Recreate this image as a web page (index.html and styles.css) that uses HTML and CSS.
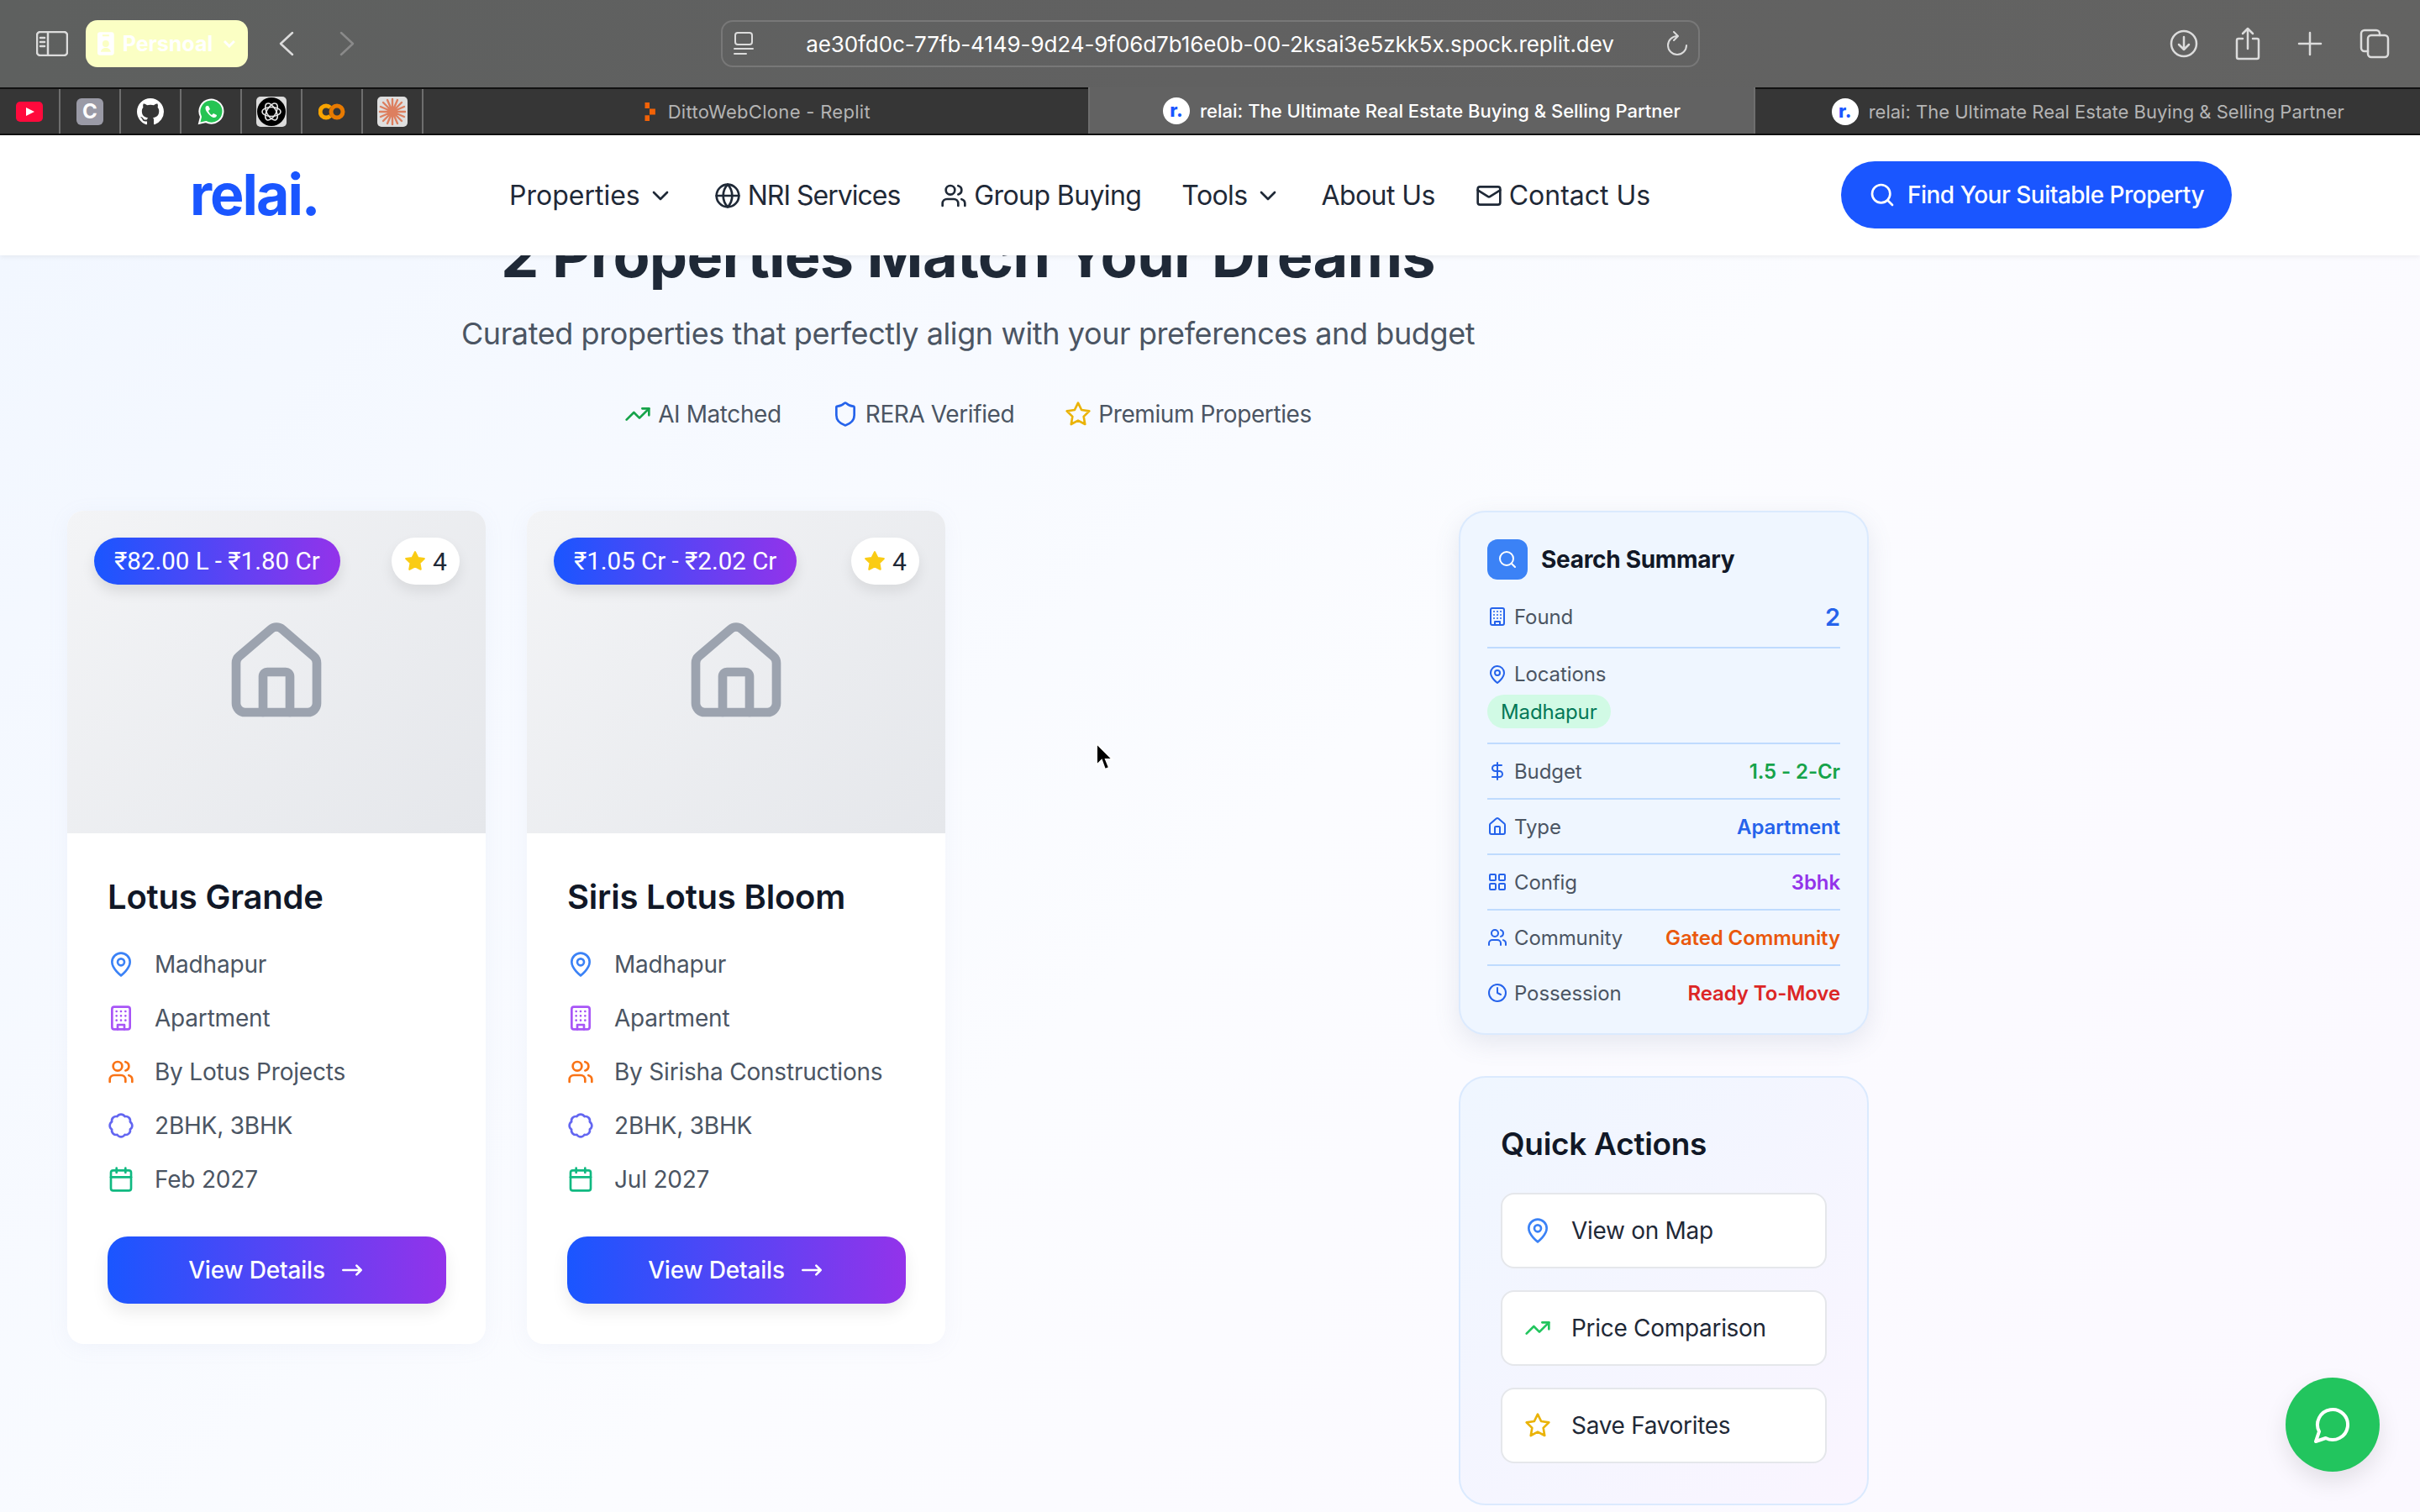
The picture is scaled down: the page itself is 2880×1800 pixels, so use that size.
FILE: index.html
```html
<!DOCTYPE html>
<html lang="en">
<head>
  <meta charset="UTF-8" />
  <title>relai: The Ultimate Real Estate Buying &amp; Selling Partner</title>
  <link rel="stylesheet" href="styles.css">
</head>
<body>

  <!-- icon set -->
  <svg class="sprite" xmlns="http://www.w3.org/2000/svg">
    <symbol id="i-pin" viewBox="0 0 24 24"><path d="M20 10c0 6-8 12-8 12s-8-6-8-12a8 8 0 0 1 16 0Z"/><circle cx="12" cy="10" r="3"/></symbol>
    <symbol id="i-building" viewBox="0 0 24 24"><rect x="4" y="2" width="16" height="20" rx="2"/><path d="M9 22v-4h6v4M8 6h.01M16 6h.01M12 6h.01M12 10h.01M12 14h.01M16 10h.01M16 14h.01M8 10h.01M8 14h.01"/></symbol>
    <symbol id="i-users" viewBox="0 0 24 24"><path d="M16 21v-2a4 4 0 0 0-4-4H6a4 4 0 0 0-4 4v2"/><circle cx="9" cy="7" r="4"/><path d="M22 21v-2a4 4 0 0 0-3-3.87"/><path d="M16 3.13a4 4 0 0 1 0 7.75"/></symbol>
    <symbol id="i-badge" viewBox="0 0 24 24"><path d="M3.85 8.62a4 4 0 0 1 4.78-4.77 4 4 0 0 1 6.74 0 4 4 0 0 1 4.78 4.78 4 4 0 0 1 0 6.74 4 4 0 0 1-4.77 4.78 4 4 0 0 1-6.75 0 4 4 0 0 1-4.78-4.77 4 4 0 0 1 0-6.76Z"/></symbol>
    <symbol id="i-calendar" viewBox="0 0 24 24"><path d="M8 2v4M16 2v4"/><rect width="18" height="18" x="3" y="4" rx="2"/><path d="M3 10h18"/></symbol>
    <symbol id="i-arrow" viewBox="0 0 24 24"><path d="M4 12h16M16 8l4 4-4 4"/></symbol>
    <symbol id="i-house" viewBox="0 0 24 24"><path d="M15 21v-8a1 1 0 0 0-1-1h-4a1 1 0 0 0-1 1v8"/><path d="M3 10a2 2 0 0 1 .709-1.528l7-5.999a2 2 0 0 1 2.582 0l7 5.999A2 2 0 0 1 21 10v9a2 2 0 0 1-2 2H5a2 2 0 0 1-2-2z"/></symbol>
    <symbol id="i-chevron" viewBox="0 0 24 24"><path d="m6 9 6 6 6-6"/></symbol>
    <symbol id="i-globe" viewBox="0 0 24 24"><circle cx="12" cy="12" r="10"/><path d="M12 2a14.5 14.5 0 0 0 0 20 14.5 14.5 0 0 0 0-20"/><path d="M2 12h20"/></symbol>
    <symbol id="i-mail" viewBox="0 0 24 24"><rect width="20" height="16" x="2" y="4" rx="2"/><path d="m22 7-8.97 5.7a1.94 1.94 0 0 1-2.06 0L2 7"/></symbol>
    <symbol id="i-search" viewBox="0 0 24 24"><circle cx="11" cy="11" r="8"/><path d="m21 21-4.3-4.3"/></symbol>
    <symbol id="i-dollar" viewBox="0 0 24 24"><path d="M12 2v20"/><path d="M17 5H9.5a3.5 3.5 0 0 0 0 7h5a3.5 3.5 0 0 1 0 7H6"/></symbol>
    <symbol id="i-grid" viewBox="0 0 24 24"><rect width="7" height="7" x="3" y="3" rx="1"/><rect width="7" height="7" x="14" y="3" rx="1"/><rect width="7" height="7" x="14" y="14" rx="1"/><rect width="7" height="7" x="3" y="14" rx="1"/></symbol>
    <symbol id="i-clock" viewBox="0 0 24 24"><circle cx="12" cy="12" r="10"/><path d="M12 6v6l4 2"/></symbol>
    <symbol id="i-trend" viewBox="0 0 24 24"><path d="M22 7l-8.5 8.5-5-5L2 17"/><path d="M16 7h6v6"/></symbol>
    <symbol id="i-shield" viewBox="0 0 24 24"><path d="M20 13c0 5-3.5 7.500-7.660 8.950a1 1 0 0 1-.67-.01C7.500 20.500 4 18 4 13V6a1 1 0 0 1 1-1c2 0 4.500-1.200 6.240-2.720a1.170 1.170 0 0 1 1.520 0C14.510 3.810 17 5 19 5a1 1 0 0 1 1 1z"/></symbol>
    <symbol id="i-star" viewBox="0 0 24 24"><path d="M12 2l3.090 6.260L22 9.270l-5 4.870 1.180 6.880L12 17.770l-6.180 3.250L7 14.140 2 9.270l6.910-1.010z"/></symbol>
    <symbol id="i-chat" viewBox="0 0 24 24"><path d="M7.900 20A9 9 0 1 0 4 16.100L2 22Z"/></symbol>
  </svg>

  <!-- Safari toolbar -->
  <header class="toolbar">
    <svg class="tool-icon sidebar-icon" viewBox="0 0 38 30"><rect x="1" y="1" width="36" height="28" rx="4"/><path d="M14 1v28M5 8h5M5 13h5M5 18h5"/></svg>
    <div class="profile">
      <svg class="profile-card" viewBox="0 0 20 28"><path d="M3 0h14a3 3 0 0 1 3 3v22a3 3 0 0 1-3 3H3a3 3 0 0 1-3-3V3a3 3 0 0 1 3-3zm3 3v2h8V3zm4 7a4 4 0 1 0 0 8 4 4 0 0 0 0-8zm-6 14h12c0-3-3-5-6-5s-6 2-6 5z" fill-rule="evenodd"/></svg>
      <span>Persnoal</span>
      <svg class="profile-caret" viewBox="0 0 16 10"><path d="M2 2l6 6 6-6"/></svg>
    </div>
    <svg class="tool-icon nav-back" viewBox="0 0 20 30"><path d="M17 2L3 15l14 13"/></svg>
    <svg class="tool-icon nav-forward" viewBox="0 0 20 30"><path d="M3 2l14 13L3 28"/></svg>
    <div class="address">
      <svg class="tool-icon address-icon" viewBox="0 0 24 30"><rect x="2" y="2" width="20" height="14" rx="3"/><path d="M1 21h22M1 27h14"/></svg>
      <span class="url">ae30fd0c-77fb-4149-9d24-9f06d7b16e0b-00-2ksai3e5zkk5x.spock.replit.dev</span>
      <svg class="tool-icon reload-icon" viewBox="0 0 26 30"><path d="M13 6a11 11 0 1 0 11 11M9 1l5 5-5 5"/></svg>
    </div>
    <div class="tool-right">
      <svg class="tool-icon" width="34" height="34" viewBox="0 0 34 34"><circle cx="17" cy="17" r="15"/><path d="M17 9v15M11 18l6 6 6-6"/></svg>
      <svg class="tool-icon" width="30" height="40" viewBox="0 0 30 40"><path d="M9 14H4a2 2 0 0 0-2 2v20a2 2 0 0 0 2 2h22a2 2 0 0 0 2-2V16a2 2 0 0 0-2-2h-5M15 26V2M9 8l6-6 6 6"/></svg>
      <svg class="tool-icon" width="30" height="30" viewBox="0 0 30 30"><path d="M15 2v26M2 15h26"/></svg>
      <svg class="tool-icon" width="36" height="36" viewBox="0 0 36 36"><rect x="10" y="8" width="24" height="26" rx="4"/><path d="M10 27H6a4 4 0 0 1-4-4V6a4 4 0 0 1 4-4h14a4 4 0 0 1 4 4v2"/></svg>
    </div>
  </header>

  <!-- tabs -->
  <div class="tabbar">
    <div class="pin">
      <svg class="fav" viewBox="0 0 32 32"><rect x="0" y="4" width="32" height="24" rx="5" fill="#ff0a3c"/><path d="M12 11l10 5-10 5z" fill="#fff"/></svg>
    </div>
    <div class="pin"><span class="fav-c">C</span></div>
    <div class="pin">
      <svg class="fav" viewBox="0 0 16 16"><path fill="#fff" d="M8 0C3.580 0 0 3.580 0 8c0 3.540 2.290 6.530 5.470 7.590.4.070.55-.17.55-.38 0-.19-.01-.82-.01-1.490-2.010.37-2.530-.49-2.690-.94-.09-.23-.48-.94-.82-1.130-.28-.15-.68-.52-.01-.53.63-.01 1.080.58 1.230.82.72 1.210 1.870.87 2.330.66.070-.52.28-.87.51-1.070-1.780-.2-3.640-.89-3.640-3.950 0-.87.31-1.590.82-2.150-.08-.2-.36-1.020.08-2.120 0 0 .67-.21 2.200.82.64-.18 1.320-.27 2-.27.68 0 1.360.09 2 .27 1.530-1.040 2.200-.82 2.200-.82.44 1.100.16 1.920.08 2.120.51.56.82 1.270.82 2.150 0 3.070-1.870 3.750-3.650 3.950.29.25.54.73.54 1.480 0 1.070-.01 1.930-.01 2.200 0 .21.15.46.55.38A8.013 8.013 0 0 0 16 8c0-4.420-3.580-8-8-8z"/></svg>
    </div>
    <div class="pin">
      <svg class="fav" viewBox="0 0 32 32"><path d="M2 30l2-8a14 14 0 1 1 6 6z" fill="#25c453" stroke="#fff" stroke-width="2"/><path d="M11 9c-2 1-2 4 0 7s5 6 8 7c2 .5 4-1 4-3l-4-2-2 2c-2-1-3-3-4-5l2-2-2-4z" fill="#fff"/></svg>
    </div>
    <div class="pin">
      <svg class="fav fav-tile" viewBox="0 0 36 36"><rect width="36" height="36" rx="5" fill="#dcdcdc"/><circle cx="18" cy="18" r="17" fill="#000"/><g fill="none" stroke="#e8e8e8" stroke-width="1.500"><ellipse cx="18" cy="18" rx="11" ry="5.500"/><ellipse cx="18" cy="18" rx="11" ry="5.500" transform="rotate(60 18 18)"/><ellipse cx="18" cy="18" rx="11" ry="5.500" transform="rotate(120 18 18)"/></g></svg>
    </div>
    <div class="pin">
      <svg class="fav" viewBox="0 0 32 32"><g fill="none" stroke-width="5"><path d="M14 11a7 7 0 1 0 0 10" stroke="#f9a400"/><circle cx="22" cy="16" r="7" stroke="#e87a00"/></g></svg>
    </div>
    <div class="pin">
      <svg class="fav fav-tile" viewBox="0 0 36 36"><rect width="36" height="36" rx="5" fill="#dfdfdf"/><g stroke="#dd7f5f" stroke-width="2.400" stroke-linecap="round"><path d="M18 3v30M3 18h30M7 7l22 22M29 7L7 29M12 4l12 28M24 4L12 32M4 12l28 12M32 12L4 24"/></g></svg>
    </div>
    <div class="tab tab-ditto">
      <svg class="replit-mark" viewBox="0 0 20 32"><path fill="#f26207" d="M2 0h8v10H2zM10 11h10v10H10zM2 22h8v10H2z"/></svg>
      <span>DittoWebClone - Replit</span>
    </div>
    <div class="tab tab-active"><span class="relai-fav">r.</span><span>relai: The Ultimate Real Estate Buying &amp; Selling Partner</span></div>
    <div class="tab"><span class="relai-fav">r.</span><span>relai: The Ultimate Real Estate Buying &amp; Selling Partner</span></div>
  </div>

  <!-- site header -->
  <nav class="site-nav">
    <div class="logo">relai.</div>
    <div class="nav-links">
      <a class="nav-link nav-wide">Properties <svg class="icon chev"><use href="#i-chevron"/></svg></a>
      <a class="nav-link nav-tight"><svg class="icon nav-icon"><use href="#i-globe"/></svg>NRI Services</a>
      <a class="nav-link"><svg class="icon nav-icon"><use href="#i-users"/></svg>Group Buying</a>
      <a class="nav-link">Tools <svg class="icon chev"><use href="#i-chevron"/></svg></a>
      <a class="nav-link">About Us</a>
      <a class="nav-link nav-wide"><svg class="icon nav-icon"><use href="#i-mail"/></svg>Contact Us</a>
    </div>
    <button class="find-btn"><svg class="icon"><use href="#i-search"/></svg>Find Your Suitable Property</button>
  </nav>

  <main class="page">
    <div class="wrap">
      <section class="hero">
        <h1>2 Properties Match Your Dreams</h1>
        <p class="hero-sub">Curated properties that perfectly align with your preferences and budget</p>
        <div class="hero-tags">
          <span class="tag"><svg class="icon c-green"><use href="#i-trend"/></svg>AI Matched</span>
          <span class="tag"><svg class="icon c-blue"><use href="#i-shield"/></svg>RERA Verified</span>
          <span class="tag"><svg class="icon c-amber"><use href="#i-star"/></svg>Premium Properties</span>
        </div>
      </section>

      <div class="layout">
        <div class="cards">
          <article class="card">
            <div class="card-img">
              <span class="price">₹82.00 L - ₹1.80 Cr</span>
              <span class="rating"><svg class="icon star-fill"><use href="#i-star"/></svg>4</span>
              <svg class="icon house"><use href="#i-house"/></svg>
            </div>
            <div class="card-body">
              <h3>Lotus Grande</h3>
              <ul class="facts">
                <li><svg class="icon c-sky"><use href="#i-pin"/></svg>Madhapur</li>
                <li><svg class="icon c-purple"><use href="#i-building"/></svg>Apartment</li>
                <li><svg class="icon c-orange"><use href="#i-users"/></svg>By Lotus Projects</li>
                <li><svg class="icon c-indigo"><use href="#i-badge"/></svg>2BHK, 3BHK</li>
                <li><svg class="icon c-emerald"><use href="#i-calendar"/></svg>Feb 2027</li>
              </ul>
              <button class="details-btn">View Details <svg class="icon"><use href="#i-arrow"/></svg></button>
            </div>
          </article>

          <article class="card">
            <div class="card-img">
              <span class="price">₹1.05 Cr - ₹2.02 Cr</span>
              <span class="rating"><svg class="icon star-fill"><use href="#i-star"/></svg>4</span>
              <svg class="icon house"><use href="#i-house"/></svg>
            </div>
            <div class="card-body">
              <h3>Siris Lotus Bloom</h3>
              <ul class="facts">
                <li><svg class="icon c-sky"><use href="#i-pin"/></svg>Madhapur</li>
                <li><svg class="icon c-purple"><use href="#i-building"/></svg>Apartment</li>
                <li><svg class="icon c-orange"><use href="#i-users"/></svg>By Sirisha Constructions</li>
                <li><svg class="icon c-indigo"><use href="#i-badge"/></svg>2BHK, 3BHK</li>
                <li><svg class="icon c-emerald"><use href="#i-calendar"/></svg>Jul 2027</li>
              </ul>
              <button class="details-btn">View Details <svg class="icon"><use href="#i-arrow"/></svg></button>
            </div>
          </article>
        </div>

        <aside class="side">
          <div class="summary">
            <div class="summary-head">
              <span class="summary-badge"><svg class="icon"><use href="#i-search"/></svg></span>
              <h4>Search Summary</h4>
            </div>
            <div class="row row-first"><span class="row-label"><svg class="icon"><use href="#i-building"/></svg>Found</span><b class="val-count">2</b></div>
            <div class="row row-stack">
              <span class="row-label"><svg class="icon"><use href="#i-pin"/></svg>Locations</span>
              <span class="chip">Madhapur</span>
            </div>
            <div class="row"><span class="row-label"><svg class="icon"><use href="#i-dollar"/></svg>Budget</span><b class="val-green">1.5 - 2-Cr</b></div>
            <div class="row"><span class="row-label"><svg class="icon"><use href="#i-house"/></svg>Type</span><b class="val-blue">Apartment</b></div>
            <div class="row"><span class="row-label"><svg class="icon"><use href="#i-grid"/></svg>Config</span><b class="val-purple">3bhk</b></div>
            <div class="row"><span class="row-label"><svg class="icon"><use href="#i-users"/></svg>Community</span><b class="val-orange">Gated Community</b></div>
            <div class="row"><span class="row-label"><svg class="icon"><use href="#i-clock"/></svg>Possession</span><b class="val-red">Ready To-Move</b></div>
          </div>

          <div class="actions">
            <h4>Quick Actions</h4>
            <a class="action"><svg class="icon c-sky"><use href="#i-pin"/></svg>View on Map</a>
            <a class="action"><svg class="icon c-green2"><use href="#i-trend"/></svg>Price Comparison</a>
            <a class="action"><svg class="icon c-amber"><use href="#i-star"/></svg>Save Favorites</a>
          </div>
        </aside>
      </div>
    </div>

    <button class="chat-fab"><svg class="icon"><use href="#i-chat"/></svg></button>
    <svg class="cursor" viewBox="0 0 22 34"><path d="M2 1v26l6-6 4 11 5-2-4-10h8z" fill="#000" stroke="#fff" stroke-width="2"/></svg>
  </main>

</body>
</html>
```

FILE: styles.css
```css
* {
  box-sizing: border-box;
}

html, body {
  margin: 0;
  height: 1800px;
  overflow: hidden;
}

body {
  display: flex;
  flex-direction: column;
  font-family: Inter, "Noto Sans", sans-serif;
  color: #1f2937;
  background: #f5f8ff;
}

h1, h3, h4, p, ul {
  margin: 0;
  padding: 0;
}

.sprite {
  display: none;
}

.icon {
  width: 32px;
  height: 32px;
  flex: none;
  fill: none;
  stroke: currentColor;
  stroke-width: 2;
  stroke-linecap: round;
  stroke-linejoin: round;
}

/* Safari toolbar */
.toolbar {
  height: 104px;
  flex: none;
  display: flex;
  align-items: center;
  padding: 0 36px 0 43px;
  background: linear-gradient(90deg, #5e605f, #616161 50%, #636362);
}

.tool-icon {
  flex: none;
  fill: none;
  stroke: #dcdcdc;
  stroke-width: 2.5;
  stroke-linecap: round;
  stroke-linejoin: round;
}

.sidebar-icon {
  width: 38px;
  height: 30px;
}

.profile {
  width: 193px;
  height: 56px;
  margin-left: 21px;
  display: flex;
  align-items: center;
  padding: 0 14px;
  border-radius: 14px;
  background: #fbffc4;
  color: #fff;
  font-size: 25px;
  font-weight: 700;
}

.profile-card {
  width: 20px;
  height: 28px;
  fill: #fff;
  margin-right: 10px;
}

.profile-caret {
  width: 16px;
  height: 10px;
  margin-left: 12px;
  fill: none;
  stroke: #fff;
  stroke-width: 3;
}

.nav-back {
  width: 20px;
  height: 30px;
  margin-left: 36px;
}

.nav-forward {
  width: 20px;
  height: 30px;
  margin-left: 52px;
  stroke: #8a8a8a;
}

.address {
  width: 1165px;
  height: 56px;
  margin-left: 435px;
  display: flex;
  align-items: center;
  padding: 0 12px 0 13px;
  border: 2px solid #787878;
  border-radius: 14px;
}

.address-icon {
  width: 24px;
  height: 30px;
  stroke-width: 2;
}

.url {
  flex: 1;
  text-align: center;
  color: #fff;
  font-size: 26px;
  letter-spacing: -0.08px;
  white-space: nowrap;
}

.reload-icon {
  width: 26px;
  height: 30px;
  stroke-width: 2;
}

.tool-right {
  margin-left: auto;
  display: flex;
  align-items: center;
  gap: 44px;
}

/* tab strip */
.tabbar {
  height: 57px;
  flex: none;
  display: flex;
  background: #363636;
  border-top: 2px solid #111;
  border-bottom: 2px solid #111;
}

.pin {
  width: 72px;
  flex: none;
  display: flex;
  align-items: center;
  justify-content: center;
  border-right: 2px solid #6e6e6e;
}

.fav {
  width: 32px;
  height: 32px;
}

.fav-tile {
  width: 36px;
  height: 36px;
}

.fav-c {
  width: 32px;
  height: 32px;
  border-radius: 6px;
  background: #9a9aa6;
  color: #fff;
  font-size: 24px;
  font-weight: 700;
  line-height: 32px;
  text-align: center;
}

.tab {
  flex: 1;
  display: flex;
  align-items: center;
  justify-content: center;
  gap: 12px;
  color: #b4b4b4;
  font-size: 22px;
  white-space: nowrap;
  background: #363636;
}

.tab-ditto {
  letter-spacing: 0.3px;
}

.tab-active {
  margin-top: -2px;
  background: #626262;
  color: #fff;
  font-weight: 500;
  border-left: 2px solid #6e6e6e;
  border-right: 2px solid #6e6e6e;
}

.replit-mark {
  width: 20px;
  height: 22px;
}

.relai-fav {
  width: 32px;
  height: 32px;
  border-radius: 50%;
  background: #fff;
  color: #1a56ff;
  font-size: 22px;
  font-weight: 800;
  line-height: 30px;
  text-align: center;
}

/* site header */
.site-nav {
  position: relative;
  z-index: 2;
  height: 143px;
  flex: none;
  display: flex;
  align-items: center;
  padding: 0 224px 2px 226px;
  background: #fff;
  box-shadow: 0 2px 6px rgba(0, 0, 0, 0.06);
}

.logo {
  width: 380px;
  flex: none;
  margin-bottom: 2px;
  color: #1a56ff;
  font-size: 68px;
  font-weight: 700;
  letter-spacing: -2px;
  line-height: 1;
}

.nav-links {
  display: flex;
  align-items: center;
  gap: 48px;
  margin-top: 2px;
  font-size: 32px;
  color: #1f2937;
  letter-spacing: -0.6px;
}

.nav-link {
  display: flex;
  align-items: center;
  gap: 8px;
  white-space: nowrap;
}

.nav-wide {
  letter-spacing: 0;
}

.nav-tight {
  letter-spacing: -1px;
}

.chev {
  width: 32px;
  height: 32px;
}

.nav-icon {
  width: 32px;
  height: 32px;
}

.find-btn {
  margin-left: auto;
  height: 80px;
  width: 465px;
  display: flex;
  align-items: center;
  justify-content: center;
  gap: 14px;
  border: 0;
  border-radius: 40px;
  background: #1a56ff;
  color: #fff;
  font-family: inherit;
  font-size: 28px;
  font-weight: 500;
  letter-spacing: -0.5px;
}

/* page */
.page {
  position: relative;
  flex: 1;
  overflow: hidden;
  background: linear-gradient(135deg, #f2f7ff, #fbfcff 50%, #fbf8ff);
}

.wrap {
  width: 2144px;
  margin: -40px 0 0 80px;
}

.hero {
  text-align: center;
}

.hero h1 {
  font-size: 72px;
  line-height: 80px;
  font-weight: 700;
  color: #1f2937;
  letter-spacing: -0.8px;
}

.hero-sub {
  margin-top: 27px;
  font-size: 36px;
  line-height: 52px;
  color: #4b5563;
  letter-spacing: -0.4px;
}

.hero-tags {
  margin-top: 53px;
  display: flex;
  justify-content: center;
  gap: 60px;
  font-size: 28px;
  color: #4b5563;
  letter-spacing: -0.4px;
}

.tag {
  display: flex;
  align-items: center;
  gap: 8px;
}

.c-green { color: #16a34a; }
.c-green2 { color: #22c55e; }
.c-blue { color: #2563eb; }
.c-amber { color: #eab308; }
.c-sky { color: #3b82f6; }
.c-purple { color: #a855f7; }
.c-orange { color: #f97316; }
.c-indigo { color: #6366f1; }
.c-emerald { color: #10b981; }

.layout {
  margin-top: 98px;
  display: flex;
  justify-content: space-between;
  align-items: flex-start;
}

.cards {
  display: flex;
  gap: 49px;
}

/* property cards */
.card {
  width: 498px;
  height: 992px;
  border-radius: 20px;
  background: #fff;
  overflow: hidden;
  box-shadow: 0 4px 24px rgba(148, 163, 200, 0.08);
}

.card-img {
  position: relative;
  height: 384px;
  display: flex;
  align-items: center;
  justify-content: center;
  background: linear-gradient(135deg, #f3f4f6, #e5e7eb);
}

.house {
  width: 128px;
  height: 128px;
  color: #9ca3af;
}

.price {
  position: absolute;
  top: 32px;
  left: 32px;
  height: 56px;
  padding: 0 24px;
  display: flex;
  align-items: center;
  border-radius: 28px;
  background: linear-gradient(90deg, #1a56ff, #9333ea);
  color: #fff;
  font-family: Roboto, sans-serif;
  font-size: 29.5px;
  box-shadow: 0 8px 16px rgba(0, 0, 0, 0.1);
  white-space: nowrap;
}

.rating {
  position: absolute;
  top: 32px;
  right: 31px;
  height: 56px;
  width: 81px;
  display: flex;
  align-items: center;
  justify-content: center;
  gap: 8px;
  border-radius: 28px;
  background: #fff;
  color: #1f2937;
  font-family: Roboto, sans-serif;
  font-size: 30px;
  box-shadow: 0 8px 16px rgba(0, 0, 0, 0.08);
}

.star-fill {
  width: 26px;
  height: 26px;
  fill: #facc15;
  color: #facc15;
}

.card-body {
  padding: 51px 48px 0;
}

.card-body h3 {
  font-size: 40px;
  line-height: 50px;
  font-weight: 600;
  color: #111827;
  letter-spacing: -0.2px;
}

.facts {
  margin-top: 23px;
  list-style: none;
  font-size: 28px;
  color: #4b5563;
  letter-spacing: -0.2px;
}

.facts li {
  height: 64px;
  display: flex;
  align-items: center;
  gap: 24px;
}

.details-btn {
  margin-top: 36px;
  width: 403px;
  height: 80px;
  display: flex;
  align-items: center;
  justify-content: center;
  gap: 16px;
  border: 0;
  border-radius: 24px;
  background: linear-gradient(90deg, #1a56ff, #9333ea);
  color: #fff;
  font-family: inherit;
  font-size: 28px;
  font-weight: 500;
  letter-spacing: -0.2px;
  box-shadow: 0 10px 20px rgba(0, 0, 0, 0.08);
}

/* right column */
.side {
  width: 488px;
  display: flex;
  flex-direction: column;
  gap: 49px;
}

.summary {
  height: 624px;
  padding: 32px 32px 0;
  border: 2px solid #dbeafe;
  border-radius: 32px;
  background: #eff6ff;
  box-shadow: 0 10px 30px rgba(100, 116, 139, 0.14);
}

.summary-head {
  display: flex;
  align-items: center;
  gap: 16px;
  height: 48px;
}

.summary-badge {
  width: 48px;
  height: 48px;
  border-radius: 12px;
  background: #3b82f6;
  color: #fff;
  display: flex;
  align-items: center;
  justify-content: center;
}

.summary-badge .icon {
  width: 24px;
  height: 24px;
}

.summary-head h4 {
  font-size: 28px;
  font-weight: 700;
  color: #111827;
  letter-spacing: -0.3px;
}

.row {
  height: 66px;
  display: flex;
  align-items: center;
  justify-content: space-between;
  border-top: 2px solid #bfdbfe;
  font-size: 24px;
  letter-spacing: -0.1px;
  white-space: nowrap;
}

.row-first {
  height: 68px;
  margin-top: 12px;
  padding-bottom: 4px;
  border-top: 0;
  align-items: center;
}

.row-stack {
  height: 114px;
  flex-direction: column;
  align-items: flex-start;
  justify-content: flex-start;
  padding-top: 16px;
}

.row-label {
  display: flex;
  align-items: center;
  gap: 8px;
  color: #4b5563;
}

.row-label .icon {
  width: 24px;
  height: 24px;
  color: #2563eb;
}

.row b {
  font-weight: 600;
}

.val-count { color: #2563eb; font-size: 29px; }
.val-green { color: #16a34a; }
.val-blue { color: #2563eb; }
.val-purple { color: #9333ea; }
.val-orange { color: #ea580c; }
.val-red { color: #dc2626; }

.chip {
  margin-top: 10px;
  height: 40px;
  padding: 0 16px;
  display: flex;
  align-items: center;
  border-radius: 20px;
  background: #d1fae5;
  color: #047857;
}

.actions {
  padding: 52px 48px 48px;
  border: 2px solid #dbeafe;
  border-radius: 32px;
  background: linear-gradient(135deg, #eff6ff, #faf5ff);
}

.actions h4 {
  font-size: 37px;
  line-height: 54px;
  font-weight: 600;
  color: #111827;
  letter-spacing: -0.3px;
  margin-bottom: 31px;
}

.action {
  height: 90px;
  margin-bottom: 26px;
  padding: 0 26px;
  display: flex;
  align-items: center;
  gap: 24px;
  border: 2px solid #e5e7eb;
  border-radius: 16px;
  background: #fff;
  font-size: 28px;
  color: #1f2937;
  letter-spacing: -0.3px;
}

.action:last-child {
  margin-bottom: 0;
}

/* overlays */
.chat-fab {
  position: absolute;
  left: 2720px;
  top: 1336px;
  width: 112px;
  height: 112px;
  display: flex;
  align-items: center;
  justify-content: center;
  border: 0;
  border-radius: 50%;
  background: #22c55e;
  color: #fff;
  box-shadow: 0 12px 28px rgba(0, 0, 0, 0.1);
}

.chat-fab .icon {
  width: 48px;
  height: 48px;
}

.cursor {
  position: absolute;
  left: 1303px;
  top: 580px;
  width: 22px;
  height: 34px;
}
```
